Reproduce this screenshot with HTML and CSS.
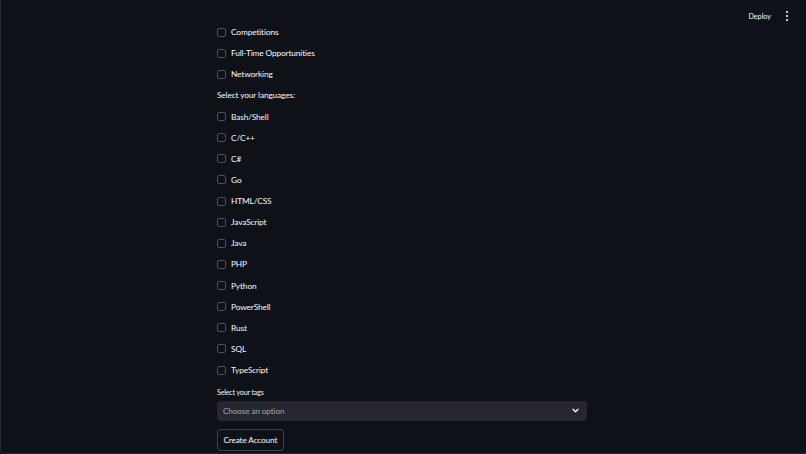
FILE: index.html
```html
<!DOCTYPE html>
<html lang="en">
<head>
<meta charset="utf-8">
<title>Create Account</title>
<link rel="stylesheet" href="styles.css">
</head>
<body>
<div class="frame">
  <header class="topbar">
    <span class="deploy">Deploy</span>
    <svg class="kebab" width="4" height="12" viewBox="0 0 4 12"><circle cx="2" cy="2" r="1.1" fill="#fafafa"/><circle cx="2" cy="6" r="1.1" fill="#fafafa"/><circle cx="2" cy="10" r="1.1" fill="#fafafa"/></svg>
  </header>
  <main class="content">
    <label class="check"><span class="box"></span><span>Competitions</span></label>
    <label class="check"><span class="box"></span><span>Full-Time Opportunities</span></label>
    <label class="check"><span class="box"></span><span>Networking</span></label>
    <div class="section-label">Select your languages:</div>
    <label class="check"><span class="box"></span><span>Bash/Shell</span></label>
    <label class="check"><span class="box"></span><span>C/C++</span></label>
    <label class="check"><span class="box"></span><span>C#</span></label>
    <label class="check"><span class="box"></span><span>Go</span></label>
    <label class="check"><span class="box"></span><span>HTML/CSS</span></label>
    <label class="check"><span class="box"></span><span>JavaScript</span></label>
    <label class="check"><span class="box"></span><span>Java</span></label>
    <label class="check"><span class="box"></span><span>PHP</span></label>
    <label class="check"><span class="box"></span><span>Python</span></label>
    <label class="check"><span class="box"></span><span>PowerShell</span></label>
    <label class="check"><span class="box"></span><span>Rust</span></label>
    <label class="check"><span class="box"></span><span>SQL</span></label>
    <label class="check"><span class="box"></span><span>TypeScript</span></label>
    <div class="tags-label">Select your tags</div>
    <div class="select">
      <span class="placeholder">Choose an option</span>
      <svg class="chevron" width="7" height="5" viewBox="0 0 7 5"><path d="M1 1.2 L3.5 3.7 L6 1.2" fill="none" stroke="#fafafa" stroke-width="1.4" stroke-linecap="round" stroke-linejoin="round"/></svg>
    </div>
    <div class="actions"><button class="btn">Create Account</button></div>
  </main>
</div>
</body>
</html>
```
FILE: styles.css
```css
html, body {
  margin: 0;
  padding: 0;
  background: #0e1117;
  height: 100%;
  overflow: hidden;
}
body {
  font-family: Lato, "Noto Sans", sans-serif;
  color: #fafafa;
}
.frame {
  position: relative;
  height: 454px;
  box-sizing: border-box;
  border-left: 1px solid #23262d;
  border-bottom: 1px solid #23262d;
  border-bottom-left-radius: 5px;
  background: #0e1117;
}
.topbar {
  position: absolute;
  top: 0;
  right: 0;
  left: 0;
  height: 32px;
  display: flex;
  justify-content: flex-end;
  align-items: center;
  gap: 14px;
  padding-right: 17px;
}
.deploy {
  font-size: 7.2px;
  color: #fafafa;
}
.kebab { display: block; }
.content {
  width: 370px;
  margin-left: 216px;
  padding-top: 21.5px;
  display: flex;
  flex-direction: column;
  letter-spacing: -0.12px;
}
.check {
  height: 21.125px;
  display: flex;
  align-items: center;
  gap: 5px;
  font-size: 8.3px;
}
.box {
  width: 7px;
  height: 7px;
  border: 1px solid #4d5058;
  border-radius: 2px;
  flex: none;
}
.section-label {
  height: 21.125px;
  display: flex;
  align-items: center;
  font-size: 8.3px;
}
.tags-label {
  font-size: 7px;
  height: 15px;
  display: flex;
  align-items: center;
  margin-top: 4px;
}
.select {
  margin-top: 1px;
  height: 20px;
  background: #262730;
  border-radius: 4px;
  display: flex;
  align-items: center;
  justify-content: space-between;
  padding: 0 8px 0 6px;
}
.placeholder {
  font-size: 8.2px;
  color: rgba(250, 250, 250, 0.6);
}
.chevron { display: block; }
.actions {
  margin-top: 8px;
  display: flex;
}
.btn {
  font-family: inherit;
  font-size: 8.2px;
  letter-spacing: -0.12px;
  color: #fafafa;
  background: #0e1117;
  border: 1px solid rgba(250, 250, 250, 0.2);
  border-radius: 4px;
  height: 22px;
  padding: 0 5.5px;
}
```
